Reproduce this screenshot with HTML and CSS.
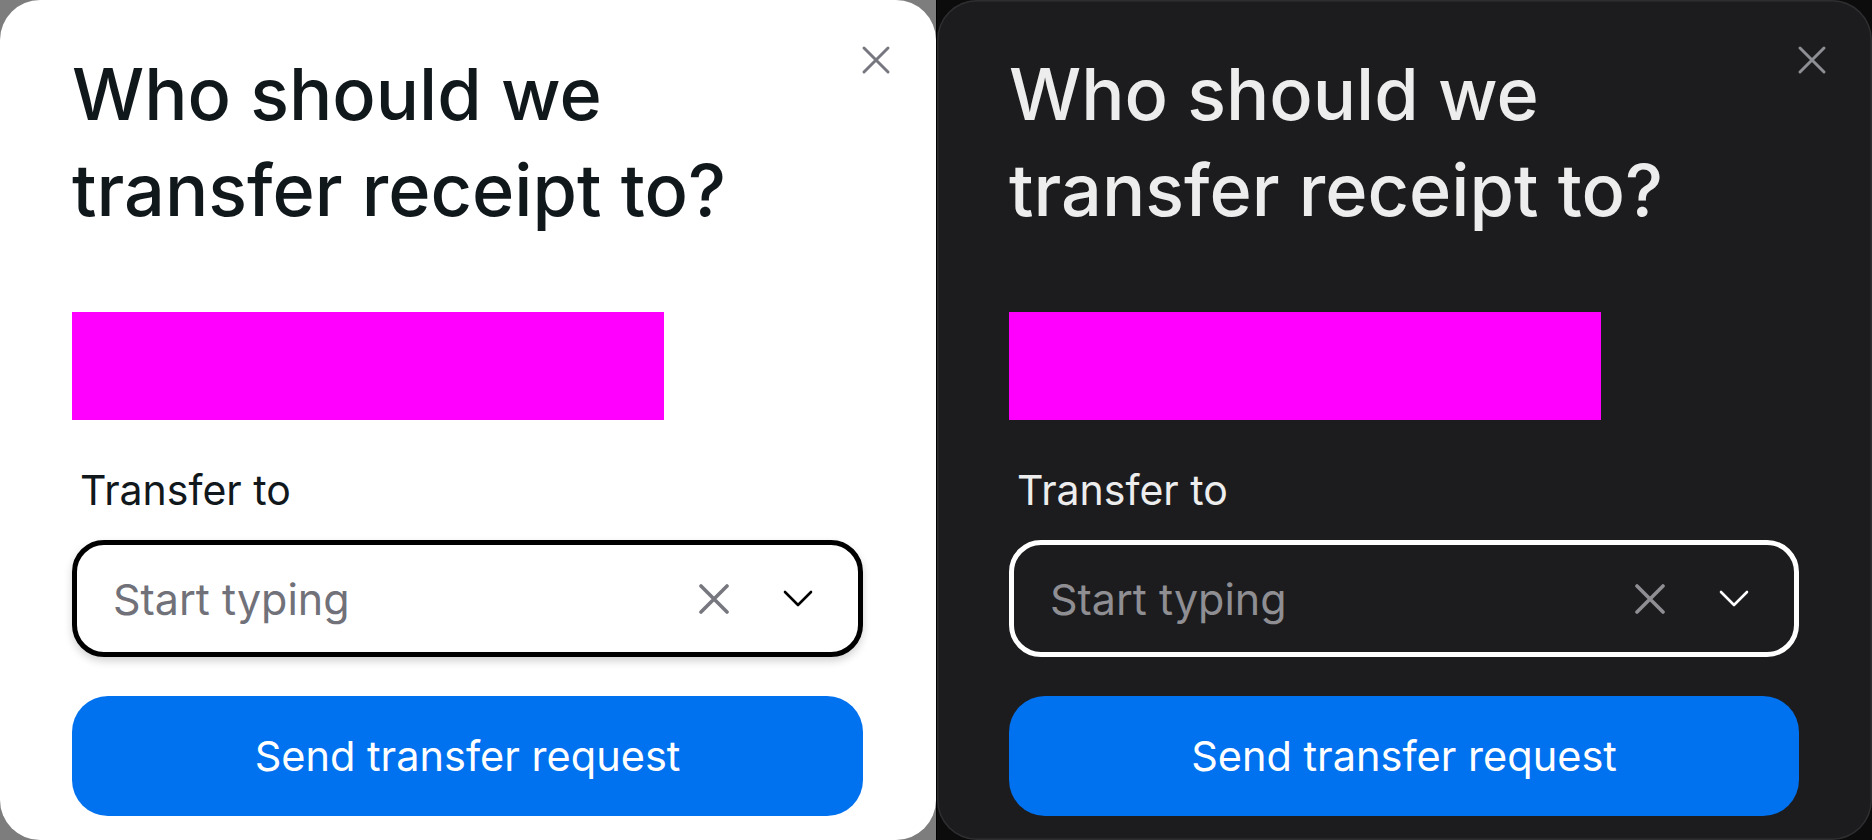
FILE: index.html
```html
<!DOCTYPE html>
<html lang="en">
<head>
<meta charset="utf-8">
<title>Transfer receipt</title>
<link rel="stylesheet" href="styles.css">
</head>
<body>
<div class="stage">
  <div class="frame light">
    <div class="modal">
      <button class="close" aria-label="Close">
        <svg width="30" height="30" viewBox="0 0 30 30"><path d="M3 3 L27 27 M27 3 L3 27" /></svg>
      </button>
      <h1 class="title">Who should we transfer receipt to?</h1>
      <div class="redacted"></div>
      <label class="label">Transfer to</label>
      <div class="field">
        <input class="field-input" type="text" placeholder="Start typing">
        <span class="icon clear">
          <svg width="30" height="30" viewBox="0 0 30 30"><path d="M2 2 L28 28 M28 2 L2 28" /></svg>
        </span>
        <span class="icon chevron">
          <svg width="30" height="18" viewBox="0 0 30 18"><path d="M2 2 L15 15 L28 2" /></svg>
        </span>
      </div>
      <button class="submit">Send transfer request</button>
    </div>
  </div>
  <div class="frame dark">
    <div class="modal">
      <button class="close" aria-label="Close">
        <svg width="30" height="30" viewBox="0 0 30 30"><path d="M3 3 L27 27 M27 3 L3 27" /></svg>
      </button>
      <h1 class="title">Who should we transfer receipt to?</h1>
      <div class="redacted"></div>
      <label class="label">Transfer to</label>
      <div class="field">
        <input class="field-input" type="text" placeholder="Start typing">
        <span class="icon clear">
          <svg width="30" height="30" viewBox="0 0 30 30"><path d="M2 2 L28 28 M28 2 L2 28" /></svg>
        </span>
        <span class="icon chevron">
          <svg width="30" height="18" viewBox="0 0 30 18"><path d="M2 2 L15 15 L28 2" /></svg>
        </span>
      </div>
      <button class="submit">Send transfer request</button>
    </div>
  </div>
</div>
</body>
</html>
```

FILE: styles.css
```css
* { box-sizing: border-box; }

html, body {
  margin: 0;
  padding: 0;
  width: 1872px;
  height: 840px;
  overflow: hidden;
  background: #000;
  font-family: Inter, "Noto Sans", sans-serif;
}

.stage {
  display: flex;
  width: 1872px;
  height: 840px;
  gap: 1px;
}

.frame {
  height: 840px;
  display: flex;
  flex: none;
}

.frame.light {
  width: 936px;
  background: #7d7d7d;
}

.frame.dark {
  width: 935px;
  background: #0c0c0d;
}

.modal {
  position: relative;
  flex: 1;
  min-width: 0;
  height: 840px;
  border-radius: 40px;
  padding: 46px 73px 24px 72px;
  display: flex;
  flex-direction: column;
  align-items: flex-start;
}

.light .modal {
  background: #ffffff;
  color: #11181c;
}

.dark .modal {
  background: #1c1c1e;
  color: #ededee;
  box-shadow: inset 0 0 0 1.5px #2e2e31;
}

.close {
  position: absolute;
  top: 45px;
  right: 45px;
  width: 30px;
  height: 30px;
  padding: 0;
  border: 0;
  background: transparent;
  display: flex;
  align-items: center;
  justify-content: center;
}

.close svg path {
  fill: none;
  stroke-width: 3;
  stroke-linecap: round;
}

.light .close svg path { stroke: #777780; }
.dark .close svg path { stroke: #8e8e95; }

.title {
  margin: 0;
  width: 700px;
  font-size: 72px;
  line-height: 96px;
  font-weight: 500;
  letter-spacing: 0;
}

.redacted {
  margin-top: 74px;
  width: 592px;
  height: 108px;
  background: #ff00ff;
}

.label {
  margin-top: 42px;
  padding-left: 8px;
  font-size: 41px;
  line-height: 56px;
  font-weight: 400;
}

.field {
  margin-top: 22px;
  width: 100%;
  height: 117px;
  border-radius: 32px;
  border: 5px solid;
  display: flex;
  align-items: center;
  padding: 0 40px 0 36px;
  gap: 44px;
}

.light .field {
  border-color: #000;
  background: #fff;
  box-shadow: 0 4px 8px rgba(0, 0, 0, 0.18);
}

.dark .field {
  border-color: #ffffff;
  background: #1c1c1e;
}

.field-input {
  flex: 1;
  width: 0;
  min-width: 0;
  border: 0;
  outline: none;
  background: transparent;
  font-family: Inter, "Noto Sans", sans-serif;
  font-size: 43px;
  line-height: 56px;
  padding: 0;
  margin-right: -8px;
}

.light .field-input::placeholder { color: #71717a; opacity: 1; }
.dark .field-input::placeholder { color: #8e8e93; opacity: 1; }

.icon {
  width: 40px;
  height: 40px;
  display: flex;
  align-items: center;
  justify-content: center;
  flex: none;
}

.clear svg path {
  fill: none;
  stroke-width: 3.6;
  stroke-linecap: round;
}

.light .clear svg path { stroke: #77777f; }
.dark .clear svg path { stroke: #8e8e93; }

.chevron svg path {
  fill: none;
  stroke-width: 2.6;
  stroke-linecap: round;
  stroke-linejoin: round;
}

.light .chevron svg path { stroke: #000; }
.dark .chevron svg path { stroke: #fff; }

.submit {
  margin-top: 39px;
  width: 100%;
  height: 120px;
  border: 0;
  border-radius: 36px;
  background: #0071ef;
  color: #ffffff;
  font-family: Inter, "Noto Sans", sans-serif;
  font-size: 41.5px;
  font-weight: 400;
  line-height: 56px;
}
```
